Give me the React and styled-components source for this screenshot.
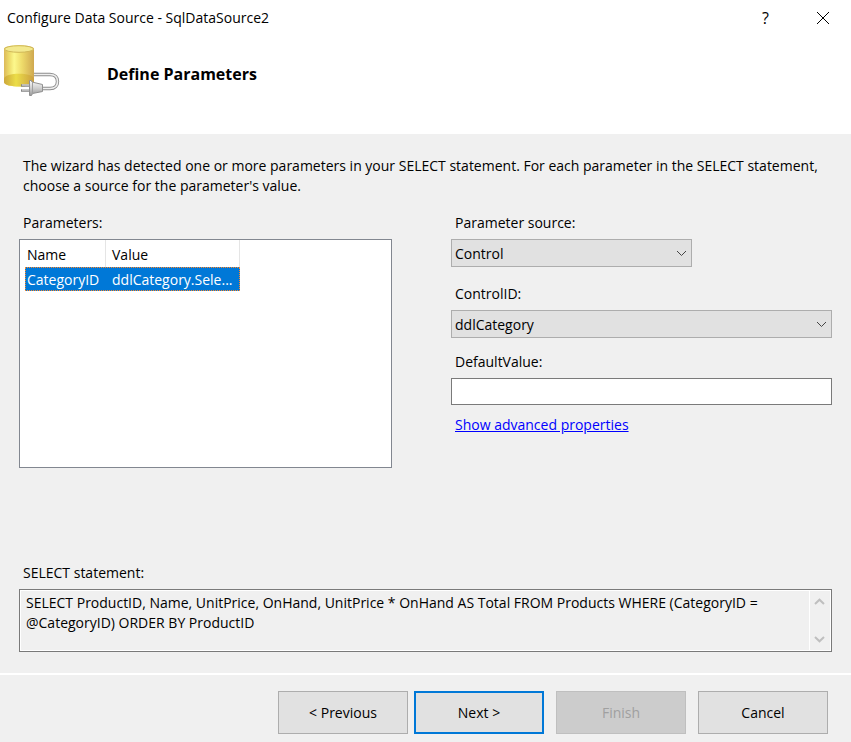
import React from "react";
import styled, { createGlobalStyle } from "styled-components";

const GlobalStyle = createGlobalStyle`
  * { box-sizing: border-box; }
  body {
    margin: 0;
    background: #f0f0f0;
    color: #000;
    font: 14px/20px "Segoe UI", "Open Sans", "Noto Sans", sans-serif;
  }
  button, input, select, textarea { font: inherit; color: inherit; border-radius: 0; }
`;

const Dialog = styled.main`
  display: flex;
  flex-direction: column;
  min-height: 100vh;
`;

const TitleBar = styled.header`
  display: flex;
  align-items: center;
  height: 36px;
  padding-left: 7px;
  background: #fff;
`;

const Title = styled.span`
  flex: 1;
`;

const CaptionButton = styled.button`
  display: grid;
  place-items: center;
  width: 57px;
  height: 36px;
  padding: 0;
  border: 0;
  background: transparent;
  font-size: 16px;
`;

const Banner = styled.section`
  display: flex;
  align-items: flex-start;
  gap: 44px;
  height: 98px;
  padding: 8px 3px;
  background: #fff;
`;

const Heading = styled.h1`
  margin: 0;
  padding-top: 20px;
  font-size: 16px;
  line-height: 20px;
  font-weight: 700;
`;

const Body = styled.section`
  flex: 1;
  display: flex;
  flex-direction: column;
  padding: 22px 19px 21px;
`;

const Intro = styled.p`
  margin: 0 0 17px;
  padding: 0 4px;
`;

const Columns = styled.div`
  display: grid;
  grid-template-columns: 373fr 381fr;
  gap: 59px;
`;

const Column = styled.div`
  display: flex;
  flex-direction: column;
  align-items: stretch;
`;

const Field = styled.div`
  display: flex;
  flex-direction: column;
  gap: 6px;
  margin-bottom: ${(p) => p.$space || 0}px;
`;

const Label = styled.label`
  padding-left: 4px;
`;

const ListBox = styled.div`
  height: 229px;
  padding: 0 5px;
  border: 1px solid #828790;
  background: #fff;
  overflow: hidden;
`;

const Table = styled.table`
  width: 215px;
  table-layout: fixed;
  border-collapse: separate;
  border-spacing: 0;
`;

const HeadCell = styled.th`
  width: ${(p) => p.$width}px;
  height: 27px;
  padding: 2px 2px 0 ${(p) => p.$inset}px;
  border-right: 1px solid #e5e5e5;
  font-weight: 400;
  text-align: left;
`;

const Row = styled.tr`
  background: #0078d7;
  color: #fff;
  outline: 1px dotted #ff8728;
  outline-offset: -1px;
`;

const Cell = styled.td`
  height: 24px;
  padding: 2px 4px 0 ${(p) => p.$inset}px;
  white-space: nowrap;
`;

const SelectWrap = styled.div`
  display: grid;
  align-items: center;
  width: 100%;
  max-width: ${(p) => p.$max || "none"};
  & > * { grid-area: 1 / 1; }
  & > svg { justify-self: end; margin-right: 5px; pointer-events: none; }
`;

const Select = styled.select`
  appearance: none;
  width: 100%;
  height: 28px;
  padding: 2px 24px 0 3px;
  border: 1px solid #adadad;
  background: #e1e1e1;
`;

const TextInput = styled.input`
  width: 100%;
  height: 27px;
  padding: 0 3px;
  border: 1px solid #7a7a7a;
  background: #fff;
`;

const Link = styled.a`
  align-self: flex-start;
  margin-left: 4px;
  color: #00f;
  text-decoration: underline;
`;

const Statement = styled(Field)`
  margin-top: auto;
`;

const StatementBox = styled.div`
  display: flex;
  height: 63px;
  border: 1px solid #7a7a7a;
  box-shadow: inset 0 0 0 1px #fff;
`;

const StatementText = styled.textarea`
  flex: 1;
  min-width: 0;
  padding: 3px 6px;
  border: 0;
  outline: 0;
  resize: none;
  overflow: hidden;
  background: transparent;
`;

const ScrollBar = styled.div`
  display: flex;
  flex-direction: column;
  justify-content: space-between;
  align-items: center;
  width: 22px;
  padding: 8px 2px 8px 0;
  border-left: 1px solid #fff;
`;

const Footer = styled.footer`
  display: flex;
  justify-content: flex-end;
  gap: 12px;
  padding: 16px 23px 8px;
  border-top: 2px solid #fff;
`;

const Pair = styled.div`
  display: flex;
  gap: 6px;
`;

const Button = styled.button`
  width: 130px;
  height: 43px;
  padding: 0;
  border: ${(p) => (p.$primary ? "2px solid #0078d7" : "1px solid #adadad")};
  background: #e1e1e1;
  &:disabled {
    border-color: #bfbfbf;
    background: #ccc;
    color: #a0a0a0;
  }
`;

function Chevron() {
  return (
    <svg width="11" height="7" viewBox="0 0 11 7" fill="none" stroke="#444" aria-hidden="true">
      <path d="M1 1 5.5 5.5 10 1" />
    </svg>
  );
}

function ScrollArrow({ up }) {
  return (
    <svg width="11" height="8" viewBox="0 0 11 8" fill="none" stroke="#bfbfbf" strokeWidth="2" aria-hidden="true">
      <path d={up ? "M1 6 5.5 1.7 10 6" : "M1 2 5.5 6.3 10 2"} />
    </svg>
  );
}

function DataSourceIcon() {
  return (
    <svg width="60" height="54" viewBox="0 0 60 54" fill="none" aria-hidden="true">
      <defs>
        <linearGradient id="barrel">
          <stop offset="0" stopColor="#dcb95a" />
          <stop offset=".16" stopColor="#ecd968" />
          <stop offset=".34" stopColor="#fcf88c" />
          <stop offset=".6" stopColor="#eedb6a" />
          <stop offset="1" stopColor="#cfa850" />
        </linearGradient>
        <linearGradient id="floor">
          <stop offset="0" stopColor="#cda83c" />
          <stop offset=".4" stopColor="#ebdd48" />
          <stop offset="1" stopColor="#cb9f40" />
        </linearGradient>
        <linearGradient id="metal" x2="0" y2="1">
          <stop offset="0" stopColor="#fafafa" />
          <stop offset=".5" stopColor="#cfcfcf" />
          <stop offset="1" stopColor="#9a9a9a" />
        </linearGradient>
      </defs>
      <path d="M1 5C1 0 31 0 31 5V38C31 44 1 44 1 38Z" fill="url(#barrel)" />
      <path d="M1 35C1 28 31 28 31 35V38C31 44 1 44 1 38Z" fill="url(#floor)" />
      <ellipse cx="16" cy="5" rx="14.5" ry="3.3" fill="#f3e98e" stroke="#d0b858" />
      <path d="M31 30.5H47C52 30.5 54.5 33.5 54.5 37.5S52 44.5 47 44.5H40" stroke="#8c8c8c" strokeWidth="3.4" />
      <path d="M31 30.5H47C52 30.5 54.5 33.5 54.5 37.5S52 44.5 47 44.5H40" stroke="#eee" strokeWidth="1.6" />
      <path d="M18 41.5H27M18 46.5H27" stroke="#868686" strokeWidth="2.6" />
      <path d="M19 41H27M19 46H27" stroke="#eee" />
      <path d="M26.5 36.5H28.5V37.5L31 38.5 39.5 40.5V47.5L29.5 49.5 28.5 51.5H26.5Z" fill="url(#metal)" stroke="#909090" />
      <path d="M29.5 38V50" stroke="#a0a0a0" />
    </svg>
  );
}

const rows = [{ name: "CategoryID", value: "ddlCategory.Sele..." }];
const query =
  "SELECT ProductID, Name, UnitPrice, OnHand, UnitPrice * OnHand AS Total FROM Products WHERE (CategoryID = @CategoryID) ORDER BY ProductID";

export default function App() {
  return (
    <Dialog>
      <GlobalStyle />
      <TitleBar>
        <Title>Configure Data Source - SqlDataSource2</Title>
        <CaptionButton aria-label="Help">?</CaptionButton>
        <CaptionButton aria-label="Close">
          <svg width="14" height="14" viewBox="0 0 14 14" stroke="#000" aria-hidden="true">
            <path d="M1 1 13 13M13 1 1 13" />
          </svg>
        </CaptionButton>
      </TitleBar>
      <Banner>
        <DataSourceIcon />
        <Heading>Define Parameters</Heading>
      </Banner>
      <Body>
        <Intro>
          The wizard has detected one or more parameters in your SELECT statement. For each parameter in the SELECT
          statement, choose a source for the parameter's value.
        </Intro>
        <Columns>
          <Field>
            <Label as="span" id="parameters-label">Parameters:</Label>
            <ListBox>
              <Table aria-labelledby="parameters-label">
                <thead>
                  <tr>
                    <HeadCell $width={81} $inset={2}>Name</HeadCell>
                    <HeadCell $width={134} $inset={6}>Value</HeadCell>
                  </tr>
                </thead>
                <tbody>
                  {rows.map((row) => (
                    <Row key={row.name}>
                      <Cell $inset={2}>{row.name}</Cell>
                      <Cell $inset={6}>{row.value}</Cell>
                    </Row>
                  ))}
                </tbody>
              </Table>
            </ListBox>
          </Field>
          <Column>
            <Field $space={17}>
              <Label htmlFor="source">Parameter source:</Label>
              <SelectWrap $max="241px">
                <Select id="source" defaultValue="Control">
                  <option>Control</option>
                </Select>
                <Chevron />
              </SelectWrap>
            </Field>
            <Field $space={14}>
              <Label htmlFor="control">ControlID:</Label>
              <SelectWrap>
                <Select id="control" defaultValue="ddlCategory">
                  <option>ddlCategory</option>
                </Select>
                <Chevron />
              </SelectWrap>
            </Field>
            <Field $space={10}>
              <Label htmlFor="default-value">DefaultValue:</Label>
              <TextInput id="default-value" type="text" />
            </Field>
            <Link href="#advanced">Show advanced properties</Link>
          </Column>
        </Columns>
        <Statement>
          <Label htmlFor="statement">SELECT statement:</Label>
          <StatementBox>
            <StatementText id="statement" readOnly value={query} />
            <ScrollBar>
              <ScrollArrow up />
              <ScrollArrow />
            </ScrollBar>
          </StatementBox>
        </Statement>
      </Body>
      <Footer>
        <Pair>
          <Button>&lt; Previous</Button>
          <Button $primary>Next &gt;</Button>
        </Pair>
        <Button disabled>Finish</Button>
        <Button>Cancel</Button>
      </Footer>
    </Dialog>
  );
}
